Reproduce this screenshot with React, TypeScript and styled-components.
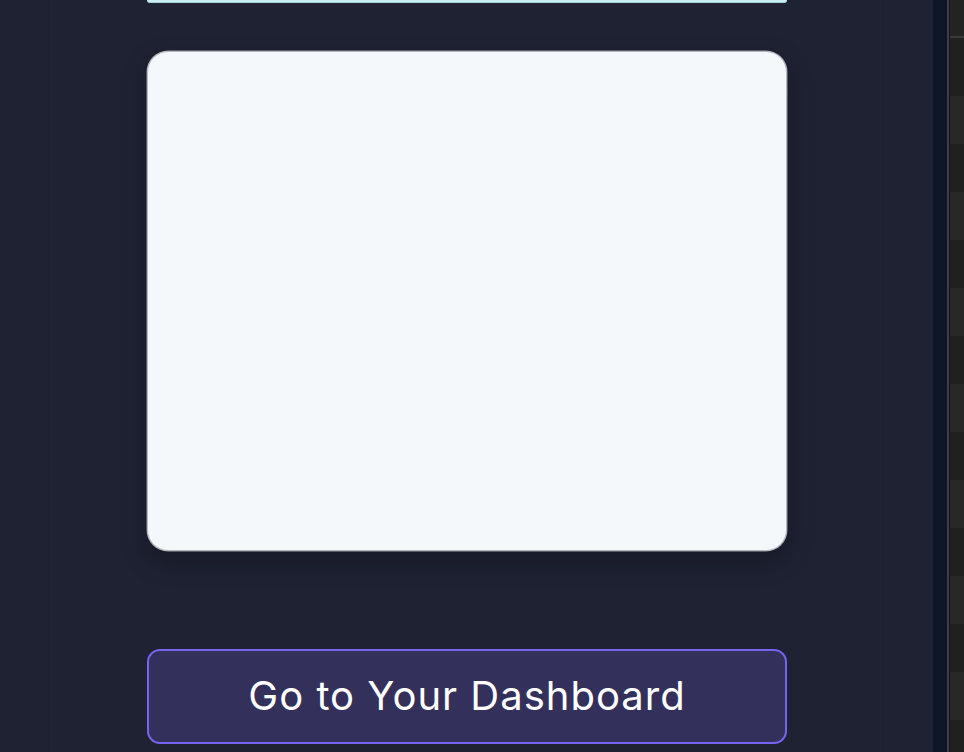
import React from "react";
import styled, { createGlobalStyle } from "styled-components";

const Global = createGlobalStyle`
  html, body { margin: 0; padding: 0; background: #1e2232; height: 100%; overflow: hidden; }
  #root { height: 752px; }
`;

const Page = styled.div`
  display: flex;
  height: 752px;
  width: 964px;
  background: #1e2232;
`;

const Gutter = styled.div<{ $w: number }>`
  width: ${(p) => p.$w}px;
  flex: none;
`;

const Panel = styled.div`
  width: 835px;
  flex: none;
  border-left: 1px solid #1b1f2e;
  border-right: 1px solid #1b1f2e;
  display: flex;
  flex-direction: column;
  padding-left: 98px;
  box-sizing: border-box;
`;

const Column = styled.div`
  width: 640px;
  display: flex;
  flex-direction: column;
`;

const TopStrip = styled.div`
  height: 3px;
  background: #c6eef3;
  border-bottom: 1px solid #a9d3da;
  border-radius: 0 0 3px 3px;
  box-sizing: border-box;
`;

const Card = styled.div`
  margin-top: 48px;
  height: 500px;
  background: #f4f8fb;
  border: 1px solid #b4b7bd;
  border-radius: 21px;
  box-sizing: border-box;
  box-shadow: 0 0 0 0.5px #9a9da4, 0 10px 24px rgba(10, 12, 20, 0.35);
`;

const Button = styled.button`
  margin-top: 98px;
  height: 95px;
  background: #33305b;
  border: 2px solid #7565ee;
  border-radius: 13px;
  color: #ffffff;
  font-family: "Inter", "Noto Sans", sans-serif;
  font-size: 40px;
  font-weight: 400;
  letter-spacing: 1px;
  display: flex;
  align-items: center;
  justify-content: center;
  cursor: pointer;
  padding: 0 0 2px;
  box-sizing: border-box;
`;

const ScrollTrack = styled.div`
  width: 14px;
  flex: none;
  background: #0f1628;
  border-right: 2px solid #3b3e46;
`;

const DevStrip = styled.div`
  flex: 1;
  display: flex;
  flex-direction: column;
  background: #1e1e1e;
  border-left: 1px solid #151515;
`;

const DevHeader = styled.div`
  height: 36px;
  border-bottom: 2px solid #3a3a3a;
  background: #232323;
  flex: none;
`;

const DevSpacer = styled.div`
  height: 58px;
  background: #202020;
  flex: none;
`;

const DevBand = styled.div<{ $light: boolean }>`
  height: 48px;
  flex: none;
  background: ${(p) => (p.$light ? "#282828" : "#202020")};
`;

export default function App() {
  const bands = Array.from({ length: 14 }, (_, i) => i % 2 === 0);
  return (
    <>
      <Global />
      <Page>
        <Gutter $w={48} />
        <Panel>
          <Column>
            <TopStrip />
            <Card />
            <Button>Go to Your Dashboard</Button>
          </Column>
        </Panel>
        <Gutter $w={50} />
        <ScrollTrack />
        <DevStrip>
          <DevHeader />
          <DevSpacer />
          {bands.map((l, i) => (
            <DevBand key={i} $light={l} />
          ))}
        </DevStrip>
      </Page>
    </>
  );
}
